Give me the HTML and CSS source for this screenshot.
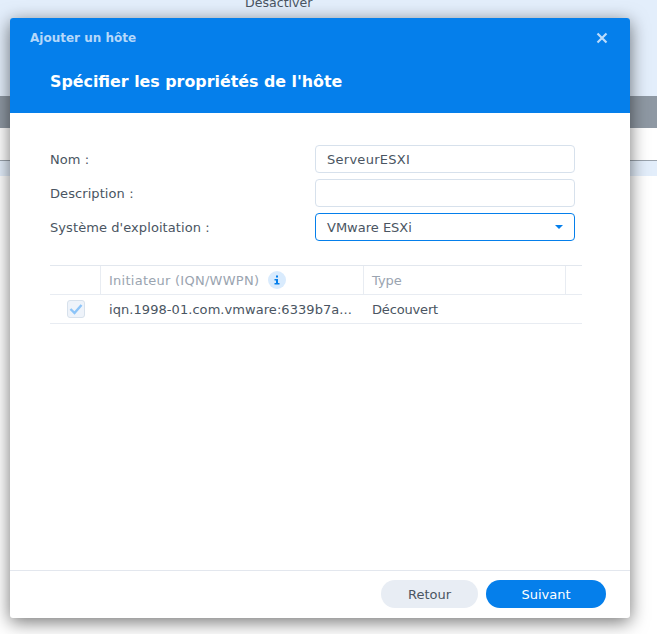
FILE: index.html
```html
<!DOCTYPE html>
<html lang="fr">
<head>
    <meta charset="UTF-8">
    <meta name="viewport" content="width=device-width, initial-scale=1.0">
    <title>Ajouter un hôte</title>
    <link rel="stylesheet" href="styles.css">
</head>
<body>
    <div class="backdrop">
        <div class="backdrop-top"><span class="backdrop-action">Désactiver</span></div>
        <div class="backdrop-bar"></div>
        <div class="backdrop-row"></div>
        <div class="backdrop-head"></div>
    </div>

    <div class="dialog">
        <header class="dialog-header">
            <div class="dialog-topline">
                <span class="dialog-name">Ajouter un hôte</span>
                <svg class="dialog-close" width="12" height="12" viewBox="0 0 12 12">
                    <path d="M1.5 1.5 L10.5 10.5 M10.5 1.5 L1.5 10.5" stroke="#bcdcfb" stroke-width="2.2" fill="none"/>
                </svg>
            </div>
            <h1 class="dialog-title">Spécifier les propriétés de l'hôte</h1>
        </header>

        <main class="dialog-body">
            <div class="form-row">
                <label class="form-label">Nom :</label>
                <div class="field field-text">ServeurESXI</div>
            </div>
            <div class="form-row">
                <label class="form-label">Description :</label>
                <div class="field"></div>
            </div>
            <div class="form-row">
                <label class="form-label">Système d'exploitation :</label>
                <div class="field field-select">
                    <span>VMware ESXi</span>
                    <span class="select-arrow"></span>
                </div>
            </div>

            <div class="grid">
                <div class="grid-row grid-head">
                    <div class="cell cell-check"></div>
                    <div class="cell cell-iqn">
                        <span class="head-text">Initiateur (IQN/WWPN)</span>
                        <span class="info-icon">
                            <svg width="8" height="10" viewBox="0 0 8 10">
                                <path d="M3 0.5 H5 V2.5 H3 Z M1.5 4 H5 V8 H6.5 V9.5 H1.5 V8 H3 V5.5 H1.5 Z" fill="#057feb"/>
                            </svg>
                        </span>
                    </div>
                    <div class="cell cell-type">Type</div>
                    <div class="cell cell-end"></div>
                </div>
                <div class="grid-row">
                    <div class="cell cell-check">
                        <span class="checkbox">
                            <svg width="14" height="12" viewBox="0 0 14 12">
                                <path d="M1.5 6 L5.5 10 L12.5 2" stroke="#8cc4f8" stroke-width="2.4" fill="none"/>
                            </svg>
                        </span>
                    </div>
                    <div class="cell cell-iqn">iqn.1998-01.com.vmware:6339b7a...</div>
                    <div class="cell cell-type cell-found">Découvert</div>
                    <div class="cell cell-end"></div>
                </div>
            </div>
        </main>

        <footer class="dialog-footer">
            <button class="btn btn-back">Retour</button>
            <button class="btn btn-next">Suivant</button>
        </footer>
    </div>
</body>
</html>
```

FILE: styles.css
```css
html, body {
    margin: 0;
    padding: 0;
}
body {
    width: 657px;
    height: 634px;
    overflow: hidden;
    position: relative;
    background-color: #fff;
    font-family: "DejaVu Sans", Verdana, sans-serif;
    font-size: 13px;
    color: #4a5562;
}

/* page behind the dialog */
.backdrop-top {
    height: 96px;
    background-color: #e3eefb;
    overflow: hidden;
}
.backdrop-action {
    display: block;
    margin: -5px 0 0 245px;
    font-size: 12.6px;
    color: #4a5562;
}
.backdrop-bar {
    height: 32px;
    background-color: #8e98a3;
}
.backdrop-row {
    height: 32px;
    background-color: #fff;
    border-bottom: 1px solid #9aa3ad;
}
.backdrop-head {
    height: 15px;
    background-color: #e3eefb;
}

/* dialog */
.dialog {
    position: absolute;
    left: 10px;
    top: 18px;
    width: 620px;
    height: 600px;
    display: flex;
    flex-direction: column;
    background-color: #fff;
    border-radius: 3px;
    box-shadow: 0 4px 18px rgba(0, 0, 0, 0.55);
}
.dialog-header {
    height: 95px;
    flex: none;
    box-sizing: border-box;
    padding: 12px 20px 0;
    background-color: #057feb;
    border-radius: 3px 3px 0 0;
}
.dialog-topline {
    display: flex;
    justify-content: space-between;
    align-items: center;
    height: 16px;
}
.dialog-name {
    font-size: 12px;
    font-weight: bold;
    color: #b5d8fa;
}
.dialog-close {
    margin-right: 2px;
}
.dialog-title {
    margin: 25px 0 0 20px;
    font-size: 15.85px;
    line-height: 22px;
    font-weight: bold;
    color: #fff;
}

.dialog-body {
    flex: 1;
    padding: 32px 48px 0 40px;
}
.form-row {
    display: flex;
    align-items: center;
    height: 28px;
    margin-bottom: 6px;
}
.form-label {
    width: 265px;
    flex: none;
    letter-spacing: 0.08px;
}
.field {
    width: 260px;
    height: 28px;
    box-sizing: border-box;
    padding: 0 11px;
    display: flex;
    align-items: center;
    justify-content: space-between;
    background-color: #fff;
    border: 1px solid #d7e1ec;
    border-radius: 4px;
}
.field-text {
    letter-spacing: 0.27px;
}
.field-select {
    border-color: #057feb;
}
.select-arrow {
    width: 0;
    height: 0;
    border-left: 4px solid transparent;
    border-right: 4px solid transparent;
    border-top: 4px solid #057feb;
}

/* initiator table */
.grid {
    margin-top: 24px;
    width: 532px;
    border-top: 1px solid #e2e7ee;
}
.grid-row {
    display: flex;
    height: 28px;
    border-bottom: 1px solid #e8ecf2;
}
.grid-head {
    color: #9aa4b0;
}
.head-text {
    letter-spacing: 0.26px;
}
.cell {
    display: flex;
    align-items: center;
    box-sizing: border-box;
    padding-left: 8px;
    white-space: nowrap;
}
.grid-head .cell {
    border-right: 1px solid #e8ecf2;
}
.grid-head .cell-end {
    border-right: none;
}
.cell-check {
    width: 51px;
    justify-content: center;
    padding-left: 0;
}
.cell-iqn {
    width: 263px;
    letter-spacing: 0.06px;
}
.cell-type {
    width: 202px;
}
.cell-found {
    letter-spacing: -0.16px;
}
.cell-end {
    flex: 1;
}
.info-icon {
    display: inline-flex;
    align-items: center;
    justify-content: center;
    width: 18px;
    height: 18px;
    margin-left: 9px;
    border-radius: 50%;
    background-color: #d9ebfd;
}
.checkbox {
    display: flex;
    align-items: center;
    justify-content: center;
    width: 16px;
    height: 16px;
    border: 1px solid #d7e1ec;
    border-radius: 3px;
    background-color: #eef3fa;
}

.dialog-footer {
    height: 48px;
    flex: none;
    box-sizing: border-box;
    display: flex;
    justify-content: flex-end;
    gap: 8px;
    padding: 9px 24px 0 0;
    border-top: 1px solid #e3e7ee;
}
.btn {
    height: 28px;
    border: none;
    border-radius: 14px;
    font-family: inherit;
    font-size: 13px;
    padding: 0;
}
.btn-back {
    width: 97px;
    background-color: #e8edf4;
    color: #4a5562;
}
.btn-next {
    width: 120px;
    background-color: #057feb;
    color: #fff;
}
```
